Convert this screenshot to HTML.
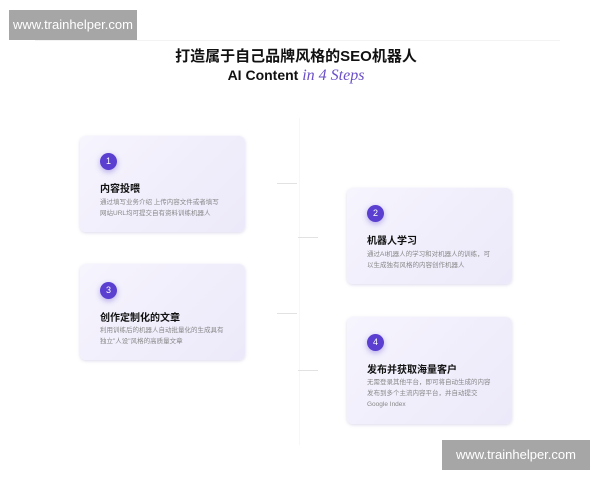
<!DOCTYPE html><html><head><meta charset="utf-8"><style>
body{margin:0;width:600px;height:480px;background:#fff;position:relative;overflow:hidden;font-family:"Liberation Sans","Noto Sans CJK SC",sans-serif}
.wm{position:absolute;background:#a6a6a6;color:#fff;font-size:13px;line-height:30px;text-align:center}
.card{position:absolute;width:165px;background:linear-gradient(135deg,#f6f4fd,#ece9fa);border-radius:6px;box-shadow:0 1px 3px rgba(120,110,180,.25)}
.c{position:absolute;left:20px;width:17px;height:17px;border-radius:50%;background:#5a3fd0;color:#fff;font-size:9px;line-height:17px;text-align:center;box-shadow:0 2px 6px rgba(90,63,208,.4)}
.t{position:absolute;left:20px;font-size:10px;font-weight:bold;color:#111}
.d{position:absolute;left:20px;width:125px;font-size:6.5px;line-height:11px;color:#888}
.ar{position:absolute;height:1px;width:20px;background:#e2e2e2}
</style></head><body>
<div class="wm" style="left:9px;top:10px;width:128px;">www.trainhelper.com</div>
<div style="position:absolute;left:35px;top:40px;width:525px;height:1px;background:#f3f3f3"></div>
<div style="position:absolute;left:0;width:592px;top:45px;text-align:center;font-size:15px;font-weight:bold;color:#111">打造属于自己品牌风格的SEO机器人</div>
<div style="position:absolute;left:0;width:592px;top:67px;text-align:center;font-size:14px;color:#111;font-weight:bold">AI Content <i style="font-family:'Liberation Serif',serif;color:#6a4fc7;font-size:16px;font-weight:normal">in 4 Steps</i></div>
<div style="position:absolute;left:299px;top:118px;width:1px;height:327px;background:#f7f7f7"></div>
<div class="ar" style="left:277px;top:183px"></div>
<div class="ar" style="left:298px;top:237px"></div>
<div class="ar" style="left:277px;top:313px"></div>
<div class="ar" style="left:298px;top:370px"></div>
<div class="card" style="left:80px;top:136px;height:96px"><div class="c" style="top:17px">1</div><div class="t" style="top:44px">内容投喂</div><div class="d" style="top:61px">通过填写业务介绍 上传内容文件或者填写网站URL均可提交自有资料训练机器人</div></div>
<div class="card" style="left:347px;top:188px;height:96px"><div class="c" style="top:17px">2</div><div class="t" style="top:44px">机器人学习</div><div class="d" style="top:61px">通过AI机器人的学习和对机器人的训练，可以生成独有风格的内容创作机器人</div></div>
<div class="card" style="left:80px;top:264px;height:96px"><div class="c" style="top:18px">3</div><div class="t" style="top:45px">创作定制化的文章</div><div class="d" style="top:61px">利用训练后的机器人自动批量化的生成具有独立"人设"风格的高质量文章</div></div>
<div class="card" style="left:347px;top:317px;height:107px"><div class="c" style="top:17px">4</div><div class="t" style="top:44px">发布并获取海量客户</div><div class="d" style="top:60px">无需登录其他平台，即可将自动生成的内容发布到多个主流内容平台，并自动提交<br>Google Index</div></div>
<div class="wm" style="left:442px;top:440px;width:148px;">www.trainhelper.com</div>
</body></html>
